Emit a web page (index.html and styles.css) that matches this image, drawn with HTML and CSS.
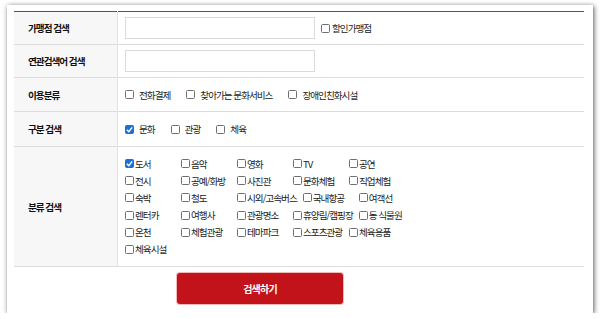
FILE: index.html
```html
<!DOCTYPE html>
<html lang="ko">
<head>
    <meta charset="UTF-8">
    <meta name="viewport" content="width=device-width, initial-scale=1.0">
    <title>가맹점 검색</title>
    <link rel="stylesheet" href="styles.css">
</head>
<body>
    <div class="card">
        <table class="search-table">
            <tr class="row-1">
                <th>가맹점 검색</th>
                <td>
                    <div class="line">
                        <input type="text" class="text-input">
                        <label class="chk chk-tight"><span class="box"></span>할인가맹점</label>
                    </div>
                </td>
            </tr>
            <tr class="row-2">
                <th>연관검색어 검색</th>
                <td><input type="text" class="text-input"></td>
            </tr>
            <tr class="row-3">
                <th>이용분류</th>
                <td>
                    <div class="line wide">
                        <label class="chk"><span class="box"></span>전화결제</label>
                        <label class="chk"><span class="box"></span>찾아가는 문화서비스</label>
                        <label class="chk"><span class="box"></span>장애인친화시설</label>
                    </div>
                </td>
            </tr>
            <tr class="row-4">
                <th>구분 검색</th>
                <td>
                    <div class="line wide">
                        <label class="chk"><span class="box checked"><svg viewBox="0 0 10 10"><polyline points="2,5.2 4.2,7.4 8,2.6"/></svg></span>문화</label>
                        <label class="chk"><span class="box"></span>관광</label>
                        <label class="chk"><span class="box"></span>체육</label>
                    </div>
                </td>
            </tr>
            <tr class="row-5">
                <th>분류 검색</th>
                <td>
                    <div class="cat-list">
                        <label class="cat"><span class="box checked"><svg viewBox="0 0 10 10"><polyline points="2,5.2 4.2,7.4 8,2.6"/></svg></span>도서</label>
                        <label class="cat"><span class="box"></span>음악</label>
                        <label class="cat"><span class="box"></span>영화</label>
                        <label class="cat"><span class="box"></span>TV</label>
                        <label class="cat"><span class="box"></span>공연</label>
                        <label class="cat"><span class="box"></span>전시</label>
                        <label class="cat"><span class="box"></span>공예/화방</label>
                        <label class="cat"><span class="box"></span>사진관</label>
                        <label class="cat"><span class="box"></span>문화체험</label>
                        <label class="cat"><span class="box"></span>직업체험</label>
                        <label class="cat"><span class="box"></span>숙박</label>
                        <label class="cat"><span class="box"></span>철도</label>
                        <label class="cat"><span class="box"></span>시외/고속버스</label>
                        <label class="cat"><span class="box"></span>국내항공</label>
                        <label class="cat"><span class="box"></span>여객선</label>
                        <label class="cat"><span class="box"></span>렌터카</label>
                        <label class="cat"><span class="box"></span>여행사</label>
                        <label class="cat"><span class="box"></span>관광명소</label>
                        <label class="cat"><span class="box"></span>휴양림/캠핑장</label>
                        <label class="cat"><span class="box"></span>동 식물원</label>
                        <label class="cat"><span class="box"></span>온천</label>
                        <label class="cat"><span class="box"></span>체험관광</label>
                        <label class="cat"><span class="box"></span>테마파크</label>
                        <label class="cat"><span class="box"></span>스포츠관광</label>
                        <label class="cat"><span class="box"></span>체육용품</label>
                        <label class="cat"><span class="box"></span>체육시설</label>
                    </div>
                </td>
            </tr>
        </table>

        <div class="actions">
            <button type="button" class="btn-search">검색하기</button>
        </div>
    </div>
</body>
</html>
```

FILE: styles.css
```css
body {
    margin: 0;
    padding: 0;
    background-color: #fff;
    font-family: "Noto Sans CJK KR", "Noto Sans", sans-serif;
    font-size: 9.6px;
    letter-spacing: -1px;
    color: #222;
}

.card {
    box-sizing: border-box;
    width: 586px;
    height: 308px;
    margin: 5px 0 0 7px;
    padding: 6px 9px 0 7px;
    background-color: #fff;
    box-shadow: 1px 1px 5px rgba(0, 0, 0, 0.65);
}

.search-table {
    width: 570px;
    border-collapse: collapse;
    border-top: 1px solid #555;
}

.search-table tr {
    border-bottom: 1px solid #dcdcdc;
}

.search-table th {
    width: 89px;
    padding: 0 0 0 14px;
    background-color: #f7f7f7;
    border-right: 1px solid #e2e2e2;
    text-align: left;
    font-weight: 700;
    color: #111;
}

.search-table td {
    padding: 0 0 0 7px;
    vertical-align: middle;
}

.row-1 th, .row-1 td { height: 32px; }
.row-2 th, .row-2 td { height: 32px; }
.row-3 th, .row-3 td { height: 33px; }
.row-4 th, .row-4 td { height: 34px; }
.row-5 th, .row-5 td { height: 119px; }

.line {
    display: flex;
    align-items: center;
}

.line.wide {
    gap: 16px;
}

.text-input {
    box-sizing: border-box;
    width: 190px;
    height: 22px;
    margin: 0;
    border: 1px solid #dadada;
    border-radius: 0;
    display: block;
}

.chk {
    display: inline-flex;
    align-items: center;
}

.chk .box {
    margin-right: 5px;
}

.chk-tight {
    margin-left: 6px;
}

.chk-tight .box {
    margin-right: 2px;
}

.box {
    box-sizing: border-box;
    display: inline-block;
    width: 9px;
    height: 9px;
    border: 1px solid #6f6f6f;
    border-radius: 1.5px;
    background-color: #fff;
    flex-shrink: 0;
}

.box.checked {
    border-color: #1a6fd8;
    background-color: #1a6fd8;
    position: relative;
}

.box svg {
    position: absolute;
    left: -1px;
    top: -1px;
    width: 9px;
    height: 9px;
}

.box polyline {
    fill: none;
    stroke: #fff;
    stroke-width: 1.6;
}

.cat-list {
    width: 305px;
    display: flex;
    flex-wrap: wrap;
}

.cat {
    display: inline-flex;
    align-items: center;
    min-width: 50px;
    height: 17.2px;
    margin-right: 6px;
}

.cat .box {
    margin-right: 1px;
}

.actions {
    padding: 6px 0 0 163px;
}

.btn-search {
    width: 166px;
    height: 31px;
    background-color: #c3131a;
    color: #fff;
    border: none;
    border-radius: 3px;
    box-shadow: 0 0 0 1px #f2b9b9;
    font-family: inherit;
    font-size: 10px;
    font-weight: 700;
    letter-spacing: -0.8px;
    cursor: pointer;
}
```
